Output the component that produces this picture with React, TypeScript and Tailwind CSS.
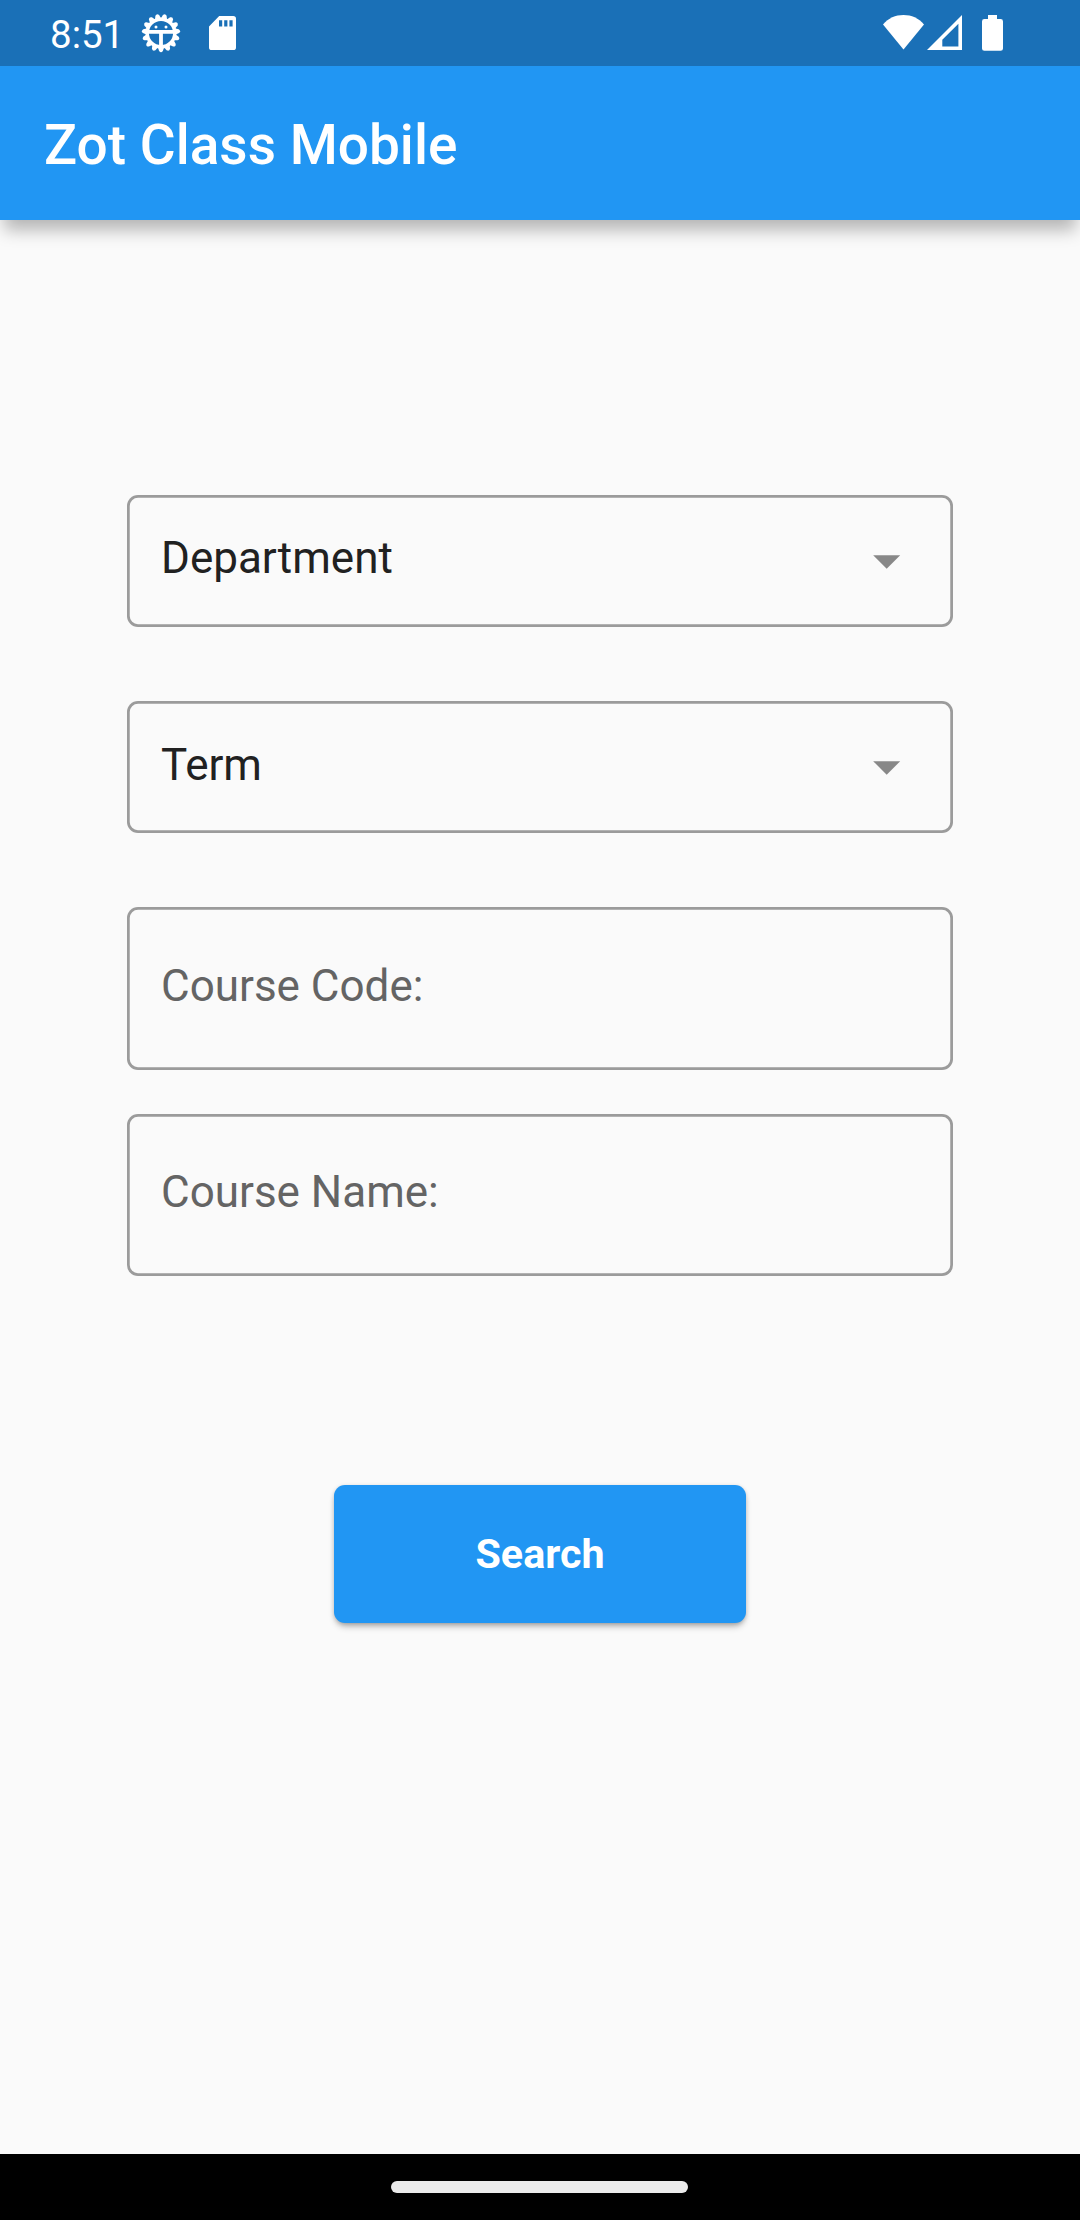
import type { ReactNode } from "react";

const TEETH = Array.from({ length: 15 }, (_, i) => i * 24 + 12);

function GearIcon() {
  return (
    <svg width="40" height="40" viewBox="-20 -20 40 40" className="block">
      <g fill="#fff">
        {TEETH.map((a) => (
          <path key={a} d="M-3.2 -14 L-1.9 -18 Q0 -20.4 1.9 -18 L3.2 -14 Z" transform={`rotate(${a})`} />
        ))}
      </g>
      <circle r="13.8" fill="none" stroke="#fff" strokeWidth="3.4" />
      <path d="M-13 -2.9 H13 V0.8 H1.9 V13 H-1.9 V0.8 H-13 Z" fill="#fff" />
      <circle cx="-5" cy="-6" r="1.5" fill="#fff" />
      <circle cx="5" cy="-6" r="1.5" fill="#fff" />
    </svg>
  );
}

function SdCardIcon() {
  return (
    <svg width="27" height="34" viewBox="0 0 27 34" className="block">
      <path
        fillRule="evenodd"
        fill="#fff"
        d="M10.2 0 H24.2 Q27 0 27 2.8 V31.4 Q27 34 24.2 34 H2.8 Q0 34 0 31.4 V10.4 Z M10 4.2 V10.6 H13.2 V4.2 Z M15.2 4.2 V10.6 H18.4 V4.2 Z M20.4 4.2 V10.6 H23.6 V4.2 Z"
      />
    </svg>
  );
}

function WifiIcon() {
  return (
    <svg width="41" height="35" viewBox="0 0 41 35" className="block">
      <path d="M0 9.4 C5.4 3.2 12.4 0 20.5 0 C28.6 0 35.6 3.2 41 9.4 L20.5 34.4 Z" fill="#fff" />
    </svg>
  );
}

function SignalIcon() {
  return (
    <svg width="35" height="35" viewBox="0 0 35 35" className="block">
      <path fillRule="evenodd" fill="#fff" d="M35 0 V35 H0 Z M31.4 8.8 L15.3 24.8 V31.4 H31.4 Z" />
    </svg>
  );
}

function BatteryIcon() {
  return (
    <svg width="21" height="36" viewBox="0 0 21 36" className="block">
      <path
        fill="#fff"
        d="M6 0 H15 V4 H18.6 Q21 4 21 6.4 V33.4 Q21 35.8 18.6 35.8 H2.4 Q0 35.8 0 33.4 V6.4 Q0 4 2.4 4 H6 Z"
      />
    </svg>
  );
}

function Field({ className, children }: { className: string; children: ReactNode }) {
  return (
    <div
      className={`mx-auto flex w-[826px] justify-between rounded-[11px] pl-[34px] pr-[52px] text-[44px] leading-[52px] shadow-[inset_0_0_0_2.75px_#9b9b9b] ${className}`}
    >
      {children}
    </div>
  );
}

function Caret() {
  return (
    <svg width="28" height="14" viewBox="0 0 28 14" className="mt-[23px] block">
      <path d="M0.2 0.2 H27.2 L13.7 13.8 Z" fill="#888" />
    </svg>
  );
}

export default function App() {
  return (
    <div className="flex h-[2220px] w-[1080px] flex-col overflow-hidden bg-[#fafafa] font-['Roboto',sans-serif]">
      <div className="flex h-[66px] shrink-0 items-start bg-[#1a70b7] text-white">
        <span className="ml-[50px] mt-[12px] w-[91px] text-[38.5px] leading-[46px]">8:51</span>
        <div className="mt-[13px]">
          <GearIcon />
        </div>
        <div className="ml-[28px] mt-[16px]">
          <SdCardIcon />
        </div>
        <div className="ml-auto mr-[77px] mt-[15px] flex">
          <WifiIcon />
          <div className="ml-[3px]">
            <SignalIcon />
          </div>
          <div className="ml-[20px]">
            <BatteryIcon />
          </div>
        </div>
      </div>
      <header className="h-[154px] shrink-0 bg-[#2196f3] pl-[44px] pt-[46px] shadow-[0_14px_16px_-4px_rgba(0,0,0,0.28)]">
        <h1 className="text-[55px] font-medium leading-[66px] text-white">Zot Class Mobile</h1>
      </header>
      <main className="grow">
        <Field className="mt-[275px] h-[132px] pt-[37px] text-[#212121]">
          <span>Department</span>
          <Caret />
        </Field>
        <Field className="mt-[74.25px] h-[132px] pt-[37px] text-[#212121]">
          <span className="pt-px">Term</span>
          <Caret />
        </Field>
        <Field className="mt-[74px] h-[162.5px] pt-[53px] text-[#646464]">
          <span>Course Code:</span>
        </Field>
        <Field className="mt-[43.75px] h-[162.5px] pt-[52px] text-[#646464]">
          <span>Course Name:</span>
        </Field>
        <button className="mx-auto mt-[209px] block h-[137.5px] w-[412.5px] rounded-[11px] bg-[#2196f3] pt-[2px] text-[41.25px] font-bold text-white shadow-[0_5px_7px_-2px_rgba(0,0,0,0.3),0_1px_4px_0_rgba(0,0,0,0.16)]">
          Search
        </button>
      </main>
      <div className="flex h-[66px] shrink-0 bg-black pt-[27px]">
        <div className="ml-[391px] h-[12px] w-[297px] rounded-full bg-[#ebebeb]" />
      </div>
    </div>
  );
}
